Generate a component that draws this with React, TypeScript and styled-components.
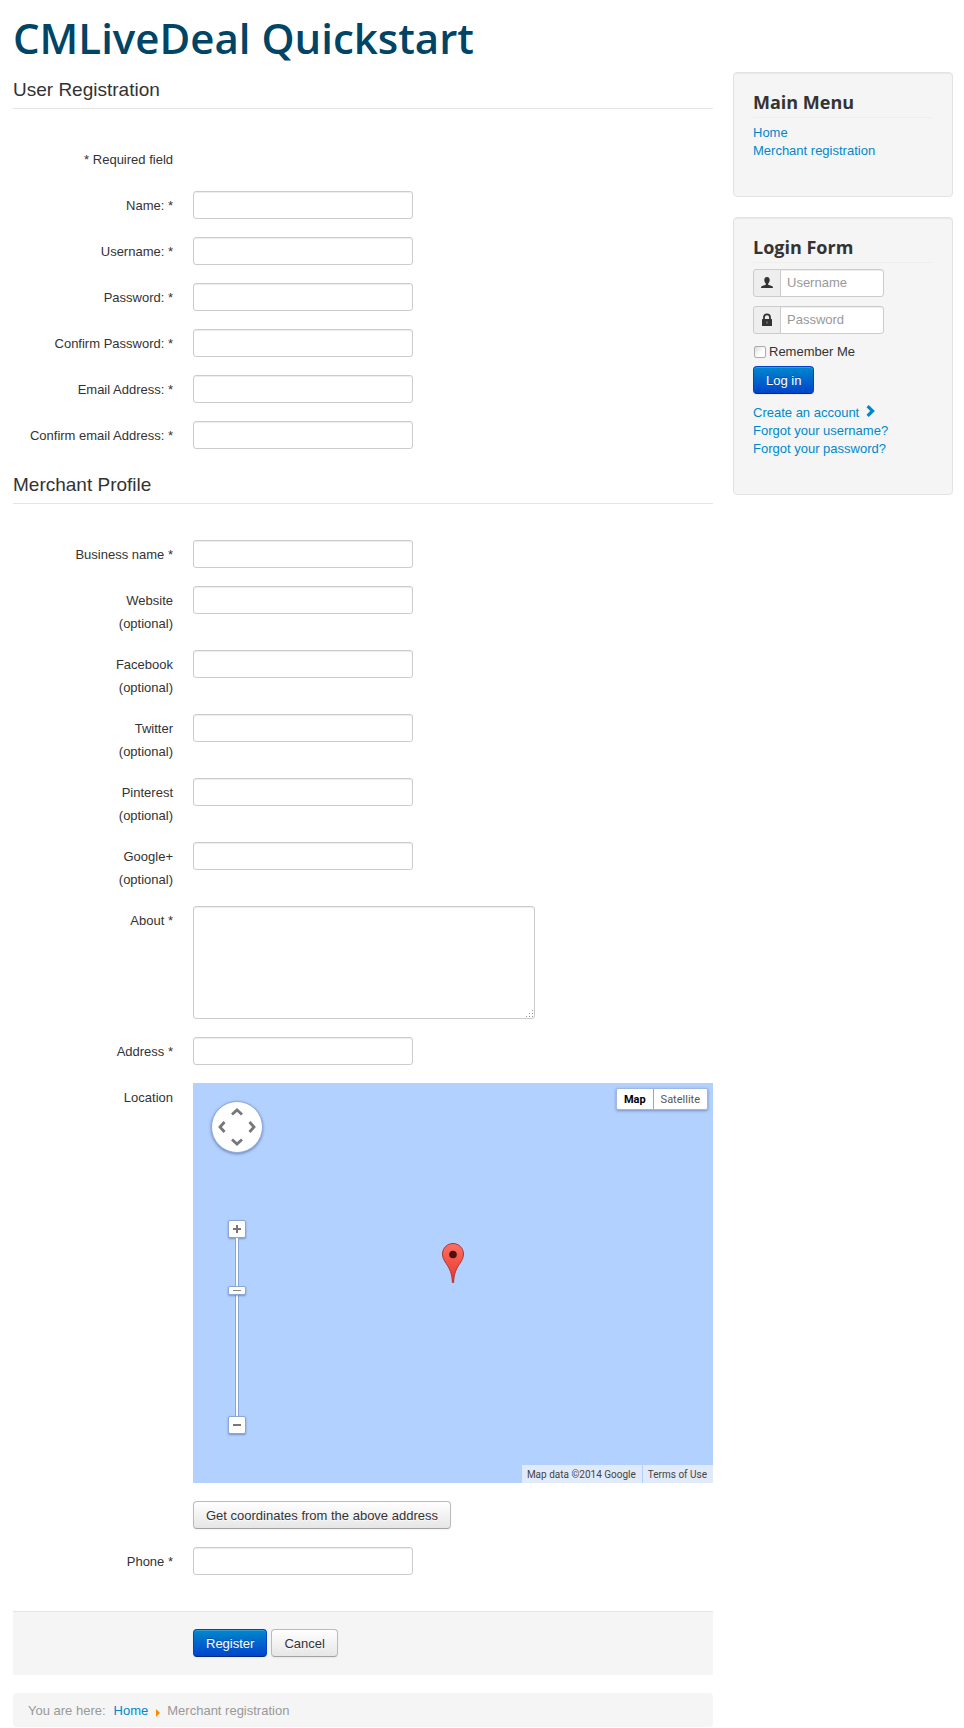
import React from "react";
import styled, { createGlobalStyle, css } from "styled-components";

const GlobalStyle = createGlobalStyle`
  *, *::before, *::after { box-sizing: border-box; }
  body {
    margin: 0;
    background: #fff;
    color: #333;
    font: 13px/18px "Liberation Sans", Arial, Helvetica, sans-serif;
  }
  input, textarea, button { font: inherit; color: inherit; margin: 0; }
`;

const Page = styled.div`
  max-width: 964px;
  margin: 0 auto;
  padding: 0 11px 0 13px;
`;

const Header = styled.header`
  height: 72px;
  display: flex;
  align-items: center;
`;

const SiteTitle = styled.h1`
  margin: 0;
  padding-top: 4px;
  color: #004466;
  font: 600 42px/48px "Open Sans", sans-serif;
  white-space: nowrap;
`;

const Columns = styled.div`
  display: grid;
  grid-template-columns: minmax(0, 1fr) 220px;
  gap: 20px;
  align-items: start;
`;

const Link = styled.a`
  color: #0088cc;
  text-decoration: none;
  &:hover { text-decoration: underline; }
`;

const Section = styled.section`
  margin-bottom: 18px;
`;

const SectionTitle = styled.h2`
  margin: 0 0 36px;
  font-size: 19px;
  font-weight: 400;
  line-height: 36px;
  border-bottom: 1px solid #e5e5e5;
`;

const Rows = styled.div`
  display: flex;
  flex-direction: column;
  gap: 18px;
`;

const Row = styled.div`
  display: grid;
  grid-template-columns: 160px minmax(0, 1fr);
  column-gap: 20px;
  align-items: start;
  min-height: 28px;
`;

const Label = styled.label`
  padding-top: 6px;
  text-align: right;
`;

const Optional = styled.span`
  display: block;
  margin: 5px 0 -1px;
`;

const field = css`
  border: 1px solid #ccc;
  border-radius: 3px;
  background: #fff;
  box-shadow: inset 0 1px 1px rgba(0, 0, 0, 0.075);
  padding: 4px 6px;
  outline: none;
  &:focus { border-color: #52a8ec; }
`;

const TextInput = styled.input`
  ${field}
  display: block;
  width: 220px;
  height: 28px;
`;

const TextArea = styled.textarea`
  ${field}
  display: block;
  width: 342px;
  height: 113px;
  resize: both;
  &::-webkit-resizer {
    background:
      linear-gradient(135deg, #fff 60%, transparent 60%),
      radial-gradient(circle, #999 1px, transparent 1px) 0 0 / 3px 3px;
  }
`;

const Button = styled.button<{ $primary?: boolean }>`
  height: 28px;
  padding: 1px 12px 0;
  border: 1px solid;
  border-color: ${(p) => (p.$primary ? "#0044cc #0044cc #002a80" : "#bbb #bbb #a2a2a2")};
  border-radius: 4px;
  background: ${(p) =>
    p.$primary ? "linear-gradient(#0088cc, #0044cc)" : "linear-gradient(#fff, #e6e6e6)"};
  color: ${(p) => (p.$primary ? "#fff" : "#333")};
  text-shadow: ${(p) =>
    p.$primary ? "0 -1px 0 rgba(0,0,0,.25)" : "0 1px 1px rgba(255,255,255,.75)"};
  box-shadow: inset 0 1px 0 rgba(255, 255, 255, 0.2), 0 1px 2px rgba(0, 0, 0, 0.05);
  white-space: nowrap;
  cursor: pointer;
`;

const MapCanvas = styled.div`
  position: relative;
  height: 400px;
  background: #b3d1ff;
  overflow: hidden;
`;

const MapControls = styled.div`
  position: absolute;
  top: 18px;
  left: 18px;
  width: 52px;
  display: flex;
  flex-direction: column;
  align-items: center;
`;

const PanDisc = styled.div`
  width: 52px;
  height: 52px;
  margin-bottom: 67px;
  padding: 3px;
  border: 1px solid #8fabdd;
  border-radius: 50%;
  background: #fff;
  box-shadow: 0 1px 3px rgba(60, 80, 130, 0.6);
  display: grid;
  grid-template-columns: repeat(3, 1fr);
  grid-template-rows: repeat(3, 1fr);
`;

const PanButton = styled.button<{ $column: number; $row: number; $turn: number }>`
  grid-column: ${(p) => p.$column};
  grid-row: ${(p) => p.$row};
  display: grid;
  place-items: center;
  padding: 0;
  border: 0;
  background: none;
  cursor: pointer;
  svg { transform: rotate(${(p) => p.$turn}deg); }
`;

const ZoomButton = styled.button`
  display: grid;
  place-items: center;
  width: 18px;
  height: 18px;
  padding: 0;
  border: 1px solid #8ba6d8;
  border-radius: 2px;
  background: #fff;
  box-shadow: 0 1px 2px rgba(60, 80, 130, 0.5);
  cursor: pointer;
`;

const ZoomSlider = styled.input`
  appearance: none;
  writing-mode: vertical-lr;
  direction: rtl;
  width: 18px;
  height: 178px;
  background: linear-gradient(#fff, #fff) center / 2px 100% no-repeat,
    linear-gradient(#8ba6d8, #8ba6d8) center / 4px 100% no-repeat;
  &::-webkit-slider-thumb {
    appearance: none;
    width: 18px;
    height: 9px;
    border: 1px solid #8ba6d8;
    border-radius: 2px;
    background: linear-gradient(#888, #888) center / 8px 1px no-repeat, #fff;
    box-shadow: 0 1px 2px rgba(60, 80, 130, 0.5);
  }
`;

const MapTypes = styled.div`
  position: absolute;
  top: 5px;
  right: 5px;
  display: flex;
  border: 1px solid #9db8e6;
  border-radius: 2px;
  background: #fff;
  box-shadow: 0 1px 3px rgba(60, 80, 130, 0.5);
`;

const MapType = styled.button<{ $active?: boolean }>`
  height: 20px;
  padding: 1px 7px 0;
  border: 0;
  background: none;
  color: ${(p) => (p.$active ? "#000" : "#565656")};
  font: ${(p) => (p.$active ? 700 : 400)} 11px/19px Roboto, sans-serif;
  cursor: pointer;
  & + & { border-left: 1px solid #8ba6d8; }
`;

const Pin = styled.svg`
  position: absolute;
  left: 50%;
  bottom: 50%;
  transform: translateX(-50%);
`;

const Attribution = styled.div`
  position: absolute;
  right: 0;
  bottom: 0;
  display: flex;
  color: #444;
  font: 10px/17px Roboto, sans-serif;
  > * {
    padding: 1px 6px 0 5px;
    color: inherit;
    background: rgba(245, 245, 245, 0.7);
    text-decoration: none;
  }
  > * + * { border-left: 1px solid #b3d1ff; }
`;

const Actions = styled.div`
  display: flex;
  gap: 4px;
  margin: 36px 0 18px;
  padding: 17px 20px 18px 180px;
  border-top: 1px solid #e5e5e5;
  background: #f5f5f5;
`;

const Breadcrumb = styled.nav`
  display: flex;
  align-items: center;
  padding: 9px 15px 7px;
  border-radius: 4px;
  background: #f5f5f5;
  color: #999;
  svg { margin: 3px 7px 0 8px; }
`;

const BreadcrumbIntro = styled.span`
  margin-right: 8px;
`;

const Sidebar = styled.aside`
  display: flex;
  flex-direction: column;
  gap: 20px;
`;

const Well = styled.section`
  padding: 19px 19px 36px;
  border: 1px solid #e3e3e3;
  border-radius: 4px;
  background: #f5f5f5;
  box-shadow: inset 0 1px 1px rgba(0, 0, 0, 0.05);
`;

const WellTitle = styled.h3`
  margin: 0 0 6px;
  padding-bottom: 5px;
  border-bottom: 1px solid #eee;
  font: 700 18px/20px "Open Sans", sans-serif;
`;

const LinkList = styled.ul`
  margin: 0;
  padding: 0;
  list-style: none;
`;

const LoginFields = styled.div`
  display: flex;
  flex-direction: column;
  gap: 9px;
`;

const Prepended = styled.div`
  display: flex;
  width: 131px;
  height: 28px;
`;

const AddOn = styled.label`
  display: grid;
  place-items: center;
  flex: 0 0 28px;
  border: 1px solid #ccc;
  border-radius: 3px 0 0 3px;
  background: #eee;
`;

const LoginInput = styled.input`
  ${field}
  flex: 1;
  min-width: 0;
  margin-left: -1px;
  border-radius: 0 3px 3px 0;
  &::placeholder { color: #999; opacity: 1; }
`;

const Remember = styled.label`
  display: flex;
  align-items: center;
  gap: 3px;
  margin-bottom: 5px;
`;

const Checkbox = styled.input`
  appearance: none;
  width: 12px;
  height: 12px;
  margin-left: 1px;
  border: 1px solid #aaa;
  border-radius: 2px;
  background: linear-gradient(135deg, #ddd, #fff 60%);
  &:checked { background: #0088cc; }
`;

const AccountLinks = styled(LinkList)`
  margin-top: 10px;
  svg { margin-left: 3px; }
`;

const UserIcon = () => (
  <svg width="12" height="12" viewBox="0 0 12 12" fill="#333" aria-hidden="true">
    <path d="M6 0C4.3 0 3.3 1.2 3.3 3c0 1.5.6 2.8 1.5 3.5v1.2L1.2 9C.4 9.400 0 10 0 11h12c0-1-.4-1.600-1.200-2L7.200 7.700V6.500C8.100 5.800 8.700 4.500 8.700 3 8.700 1.200 7.700 0 6 0z" />
  </svg>
);

const LockIcon = () => (
  <svg width="12" height="14" viewBox="0 0 12 14" aria-hidden="true">
    <path d="M3 7V4.300a3 3 0 0 1 6 0V7" fill="none" stroke="#333" strokeWidth="1.800" />
    <rect x="1" y="6" width="10" height="7" rx="0.500" fill="#333" />
    <path d="M5.500 8.500h1v2h-1z" fill="#999" />
  </svg>
);

const ChevronIcon = () => (
  <svg width="10" height="12" viewBox="0 0 10 12" aria-hidden="true">
    <path d="M.5 2.300 2.700.1 8.900 6l-6.200 5.900L.5 9.700 4.200 6z" fill="#0088cc" />
  </svg>
);

const PanArrow = () => (
  <svg width="12" height="8" viewBox="0 0 12 8" aria-hidden="true">
    <path d="M1 6.500 6 2l5 4.500" fill="none" stroke="#777" strokeWidth="2.800" />
  </svg>
);

const PAN = [
  { name: "Pan up", column: 2, row: 1, turn: 0 },
  { name: "Pan left", column: 1, row: 2, turn: -90 },
  { name: "Pan right", column: 3, row: 2, turn: 90 },
  { name: "Pan down", column: 2, row: 3, turn: 180 },
];

function LocationMap() {
  return (
    <MapCanvas>
      <MapControls>
        <PanDisc>
          {PAN.map((p) => (
            <PanButton key={p.name} type="button" aria-label={p.name} $column={p.column} $row={p.row} $turn={p.turn}>
              <PanArrow />
            </PanButton>
          ))}
        </PanDisc>
        <ZoomButton type="button" aria-label="Zoom in">
          <svg width="8" height="8" viewBox="0 0 8 8"><path d="M0 4h8M4 0v8" stroke="#777" strokeWidth="2" /></svg>
        </ZoomButton>
        <ZoomSlider type="range" min={0} max={21} defaultValue={15} aria-label="Zoom level" />
        <ZoomButton type="button" aria-label="Zoom out">
          <svg width="8" height="8" viewBox="0 0 8 8"><path d="M0 4h8" stroke="#777" strokeWidth="2" /></svg>
        </ZoomButton>
      </MapControls>
      <MapTypes>
        <MapType type="button" $active>Map</MapType>
        <MapType type="button">Satellite</MapType>
      </MapTypes>
      <Pin width="22" height="40" viewBox="0 0 22 40" aria-hidden="true">
        <defs>
          <linearGradient id="pin" x1="0" y1="0" x2="0" y2="1">
            <stop offset="0" stopColor="#fb7064" />
            <stop offset="1" stopColor="#e8342a" />
          </linearGradient>
        </defs>
        <path
          d="M11 .5C5.200.5.5 5.200.5 11c0 3.400 1.300 5.900 3.500 9.200 3.600 5.300 6 10 6.400 19.300h1.200c.4-9.300 2.800-14 6.400-19.300 2.200-3.300 3.500-5.800 3.500-9.200C21.500 5.200 16.800.5 11 .5z"
          fill="url(#pin)"
          stroke="#b3352c"
        />
        <circle cx="11" cy="11.500" r="3.800" fill="#4f0f0b" />
      </Pin>
      <Attribution>
        <span>Map data ©2014 Google</span>
        <a href="#terms">Terms of Use</a>
      </Attribution>
    </MapCanvas>
  );
}

type Field = { id: string; label: string; optional?: boolean; type?: string };

const ACCOUNT: Field[] = [
  { id: "name", label: "Name: *" },
  { id: "username", label: "Username: *" },
  { id: "password", label: "Password: *", type: "password" },
  { id: "password2", label: "Confirm Password: *", type: "password" },
  { id: "email", label: "Email Address: *", type: "email" },
  { id: "email2", label: "Confirm email Address: *", type: "email" },
];

const PROFILE: Field[] = [
  { id: "business", label: "Business name *" },
  { id: "website", label: "Website", optional: true },
  { id: "facebook", label: "Facebook", optional: true },
  { id: "twitter", label: "Twitter", optional: true },
  { id: "pinterest", label: "Pinterest", optional: true },
  { id: "google", label: "Google+", optional: true },
];

const FieldRow = ({ id, label, optional, type = "text" }: Field) => (
  <Row>
    <Label htmlFor={id}>
      {label}
      {optional && <Optional>(optional)</Optional>}
    </Label>
    <TextInput id={id} type={type} />
  </Row>
);

export default function App() {
  return (
    <>
      <GlobalStyle />
      <Page>
        <Header>
          <SiteTitle>CMLiveDeal Quickstart</SiteTitle>
        </Header>
        <Columns>
          <main>
            <form onSubmit={(e) => e.preventDefault()}>
              <Section>
                <SectionTitle>User Registration</SectionTitle>
                <Rows>
                  <Row>
                    <Label as="span">* Required field</Label>
                  </Row>
                  {ACCOUNT.map((f) => <FieldRow key={f.id} {...f} />)}
                </Rows>
              </Section>
              <Section>
                <SectionTitle>Merchant Profile</SectionTitle>
                <Rows>
                  {PROFILE.map((f) => <FieldRow key={f.id} {...f} />)}
                  <Row>
                    <Label htmlFor="about">About *</Label>
                    <TextArea id="about" />
                  </Row>
                  <FieldRow id="address" label="Address *" />
                  <Row>
                    <Label as="span">Location</Label>
                    <Rows>
                      <LocationMap />
                      <div>
                        <Button type="button">Get coordinates from the above address</Button>
                      </div>
                    </Rows>
                  </Row>
                  <FieldRow id="phone" label="Phone *" type="tel" />
                </Rows>
              </Section>
              <Actions>
                <Button type="submit" $primary>Register</Button>
                <Button type="button">Cancel</Button>
              </Actions>
            </form>
            <Breadcrumb aria-label="Breadcrumb">
              <BreadcrumbIntro>You are here:</BreadcrumbIntro>
              <Link href="#home">Home</Link>
              <svg width="4" height="8" viewBox="0 0 4 8" aria-hidden="true"><path d="M0 0l4 4-4 4z" fill="#ff8800" /></svg>
              <span>Merchant registration</span>
            </Breadcrumb>
          </main>
          <Sidebar>
            <Well>
              <WellTitle>Main Menu</WellTitle>
              <LinkList>
                <li><Link href="#home">Home</Link></li>
                <li><Link href="#merchant">Merchant registration</Link></li>
              </LinkList>
            </Well>
            <Well>
              <WellTitle>Login Form</WellTitle>
              <form onSubmit={(e) => e.preventDefault()}>
                <LoginFields>
                  <Prepended>
                    <AddOn htmlFor="login-user" aria-label="Username"><UserIcon /></AddOn>
                    <LoginInput id="login-user" type="text" placeholder="Username" />
                  </Prepended>
                  <Prepended>
                    <AddOn htmlFor="login-pass" aria-label="Password"><LockIcon /></AddOn>
                    <LoginInput id="login-pass" type="password" placeholder="Password" />
                  </Prepended>
                  <Remember>
                    <Checkbox type="checkbox" />
                    Remember Me
                  </Remember>
                </LoginFields>
                <Button type="submit" $primary>Log in</Button>
              </form>
              <AccountLinks>
                <li><Link href="#create">Create an account <ChevronIcon /></Link></li>
                <li><Link href="#username">Forgot your username?</Link></li>
                <li><Link href="#password">Forgot your password?</Link></li>
              </AccountLinks>
            </Well>
          </Sidebar>
        </Columns>
      </Page>
    </>
  );
}
